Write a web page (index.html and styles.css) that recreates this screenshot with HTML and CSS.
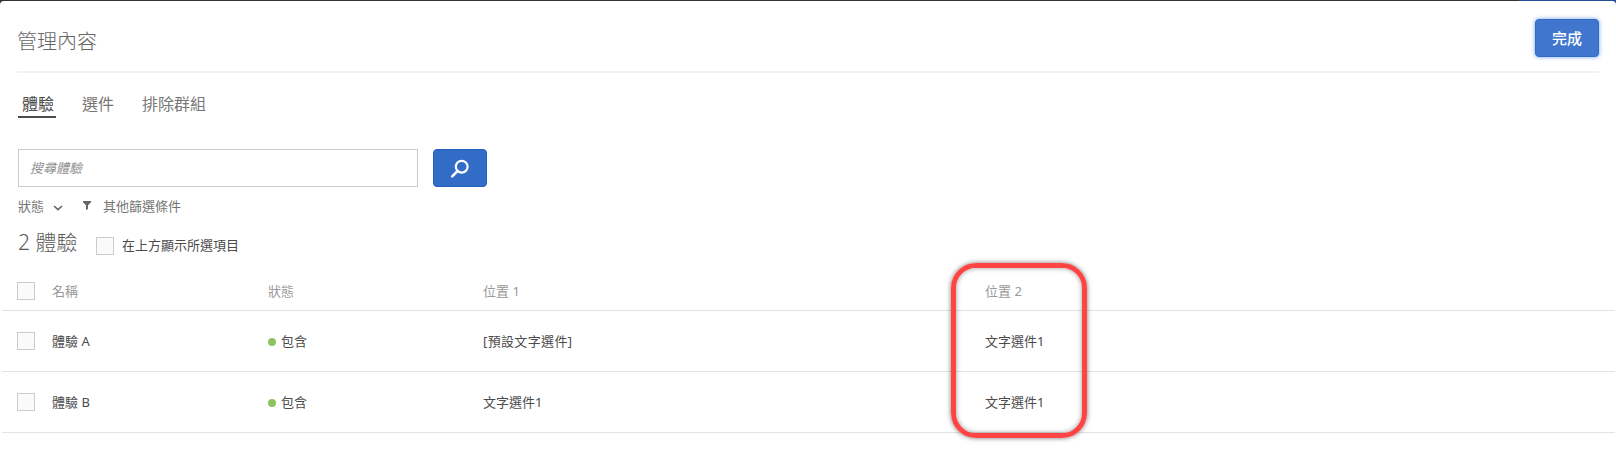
FILE: index.html
```html
<!DOCTYPE html>
<html lang="zh-Hant">
<head>
<meta charset="utf-8">
<title>管理內容</title>
<link rel="stylesheet" href="styles.css">
</head>
<body>
<main class="modal">
  <header class="modal-header">
    <h1 class="title">管理內容</h1>
    <button class="done">完成</button>
  </header>
  <nav class="tabs">
    <a class="tab active">體驗</a>
    <a class="tab">選件</a>
    <a class="tab">排除群組</a>
  </nav>
  <div class="search">
    <div class="search-input">搜尋體驗</div>
    <button class="search-button">
      <svg width="20" height="20" viewBox="0 0 20 20" fill="none" stroke="#fff"><circle cx="11.7" cy="7.7" r="5.9" stroke-width="2.2"/><path d="M7.6 12 2.2 17.4" stroke-width="2.5" stroke-linecap="round"/></svg>
    </button>
  </div>
  <div class="filters">
    <span>狀態</span>
    <svg class="chevron" width="10" height="6" viewBox="0 0 10 6" fill="none" stroke="#666" stroke-width="1.6"><path d="M1 1 5 4.7 9 1"/></svg>
    <svg class="funnel" width="8" height="9" viewBox="0 0 8 9" fill="#666"><path d="M0 0H8V1.2L5 4.3V8L3 9V4.3L0 1.2Z"/></svg>
    <span>其他篩選條件</span>
  </div>
  <div class="summary">
    <h2 class="count">2 體驗</h2>
    <span class="checkbox"></span>
    <span class="summary-label">在上方顯示所選項目</span>
  </div>
  <section class="table">
    <div class="row head"><span class="checkbox"></span><span class="cell">名稱</span><span class="cell">狀態</span><span class="cell">位置 1</span><span class="cell">位置 2</span></div>
    <div class="row"><span class="checkbox"></span><span class="cell">體驗 A</span><span class="cell status"><i class="dot"></i>包含</span><span class="cell offer">[預設文字選件]</span><span class="cell">文字選件1</span></div>
    <div class="row"><span class="checkbox"></span><span class="cell">體驗 B</span><span class="cell status"><i class="dot"></i>包含</span><span class="cell">文字選件1</span><span class="cell">文字選件1</span></div>
    <div class="highlight"></div>
  </section>
</main>
</body>
</html>
```
FILE: styles.css
```css
* { box-sizing: border-box; }
body {
  margin: 0;
  padding-top: 1px;
  height: 465px;
  overflow: hidden;
  background: linear-gradient(90deg, #343237 1519px, #24509a 1519px);
  font-family: "Noto Sans", "Noto Sans CJK TC", sans-serif;
  font-size: 13px;
  color: #4b4b4b;
}
.modal {
  height: 464px;
  background: #fff;
  border-radius: 4px 4px 0 0;
}
.modal-header {
  display: flex;
  justify-content: space-between;
  align-items: flex-start;
  height: 72px;
  margin: 0 17px;
  padding-top: 18px;
  border-bottom: 2px solid #f2f2f2;
}
.title {
  margin: 8px 0 0;
  font-size: 20px;
  line-height: 30px;
  font-weight: 300;
  color: #666;
}
.done {
  width: 64px;
  height: 38px;
  padding: 0;
  border: 1px solid #326ac8;
  border-radius: 4px;
  background: #4076cd;
  box-shadow: 0 0 4px #6fa0f0;
  color: #fff;
  font: 500 15px/34px "Noto Sans CJK TC", sans-serif;
}
.tabs {
  display: flex;
  gap: 21px;
  height: 45px;
  padding: 17px 0 0 18px;
  font-size: 16px;
  line-height: 28px;
  color: #777;
}
.tab { height: 28px; padding: 0 4px; }
.tab.active {
  padding: 0 2px 0 4px;
  color: #4b4b4b;
  border-bottom: 2px solid #4b4b4b;
}
.tab:nth-child(2) { padding: 0 3px 0 5px; }
.search {
  display: flex;
  gap: 15px;
  margin: 31px 0 0 18px;
}
.search-input {
  width: 400px;
  height: 38px;
  padding-left: 11px;
  border: 1px solid #ccc;
  font-style: italic;
  line-height: 37px;
  color: #909090;
}
.search-button {
  display: grid;
  place-items: center;
  width: 54px;
  height: 38px;
  padding: 2px 0 0;
  border: 1px solid #1f5fc0;
  border-radius: 4px;
  background: #326cc7;
}
.filters {
  display: flex;
  align-items: center;
  height: 20px;
  margin: 8px 0 0 18px;
  color: #747474;
}
.chevron { margin: 5px 20px 0 9px; }
.funnel { margin: 1px 12px 0 0; }
.summary {
  display: flex;
  height: 41px;
  margin: 11px 0 0 18px;
}
.count {
  width: 78px;
  margin: 0;
  font-size: 21px;
  line-height: 32px;
  font-weight: 300;
  color: #5a5a5a;
}
.checkbox {
  display: block;
  width: 18px;
  height: 18px;
  border: 1px solid #ccc;
  background: #fafafa;
}
.summary .checkbox { margin-top: 11px; }
.summary-label { margin-left: 8px; line-height: 38px; }
.table { position: relative; margin: 0 1px 0 2px; }
.row {
  display: grid;
  grid-template-columns: 35px 216px 215px 502px 1fr;
  align-items: center;
  height: 61px;
  padding-left: 15px;
  border-bottom: 1px solid #e3e3e3;
}
.cell { padding-bottom: 2px; }
.offer { letter-spacing: .35px; }
.head { height: 44px; padding-top: 5px; color: #999; }
.status { display: flex; align-items: center; }
.dot { width: 8px; height: 8px; margin: 4px 5px 0 0; border-radius: 50%; background: #8dc35f; }
.highlight {
  position: absolute;
  left: 949px;
  top: -4px;
  width: 136px;
  height: 175px;
  border: 5px solid #ff4444;
  border-radius: 25px;
  box-shadow: 0 0 5px rgba(0,0,0,.55), inset 0 0 5px rgba(0,0,0,.4);
}
```
